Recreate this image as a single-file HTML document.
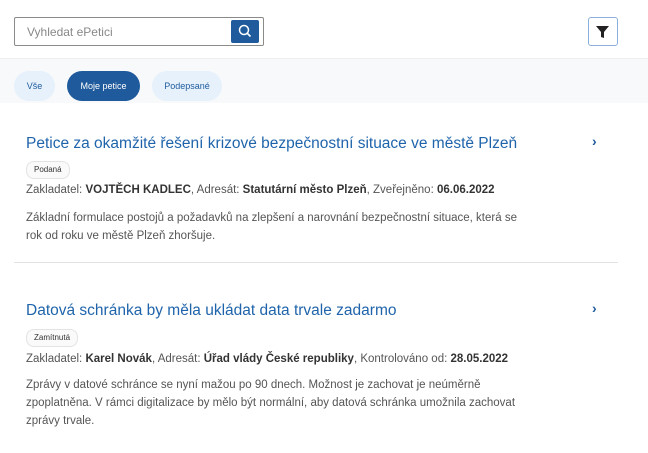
<!DOCTYPE html>
<html><head><meta charset="utf-8"><style>
body{margin:0;width:648px;height:453px;background:#fff;font-family:"Liberation Sans",sans-serif;position:relative;overflow:hidden}
.a{position:absolute}
.search{left:14px;top:17px;width:250px;height:29px;border:1px solid #8a8a8a;border-radius:2px;box-sizing:border-box}
.search span{position:absolute;left:12px;top:7px;font-size:12px;color:#888}
.sbtn{position:absolute;right:4px;top:2px;width:28px;height:23px;background:#1f5b9c;border-radius:2px}
.filt{left:588px;top:17px;width:30px;height:29px;border:1.5px solid #8cb0dd;border-radius:3px;box-sizing:border-box}
.band{left:0;top:58px;width:648px;height:44px;background:#f8f9fb;border-top:1px solid #eceef0}
.pill{top:71px;height:30px;border-radius:15px;background:#e6f1fc;color:#1f5b9c;font-size:9px;line-height:30px;text-align:center}
.title{left:26px;font-size:15.5px;color:#1f64ab;white-space:nowrap}
.badge{left:26px;height:16px;border:1px solid #e3e3e3;border-radius:8px;font-size:8px;line-height:16px;padding:0 7px;color:#333;background:#fafafa}
.meta{left:26px;font-size:11.5px;color:#555;white-space:nowrap}
.meta b{color:#333}
.desc{left:26px;font-size:11.5px;color:#555;line-height:18px}
.chev{left:592px;font-size:14px;color:#1f5b9c;font-weight:bold}
</style></head><body>
<div class="a search"><span>Vyhledat ePetici</span><div class="sbtn"><svg width="28" height="23"><circle cx="13" cy="10" r="4.5" fill="none" stroke="#fff" stroke-width="1.5"/><line x1="16.3" y1="13.3" x2="19.5" y2="16.5" stroke="#fff" stroke-width="1.6"/></svg></div></div>
<div class="a filt"><svg width="27" height="26"><path d="M7 8h13l-5 6v6l-3-1v-5z" fill="#222"/></svg></div>
<div class="a band"></div>
<div class="a pill" style="left:14px;width:41px">Vše</div>
<div class="a pill" style="left:67px;width:73px;background:#1f5b9c;color:#fff">Moje petice</div>
<div class="a pill" style="left:152px;width:70px">Podepsané</div>

<div class="a title" style="top:135px">Petice za okamžité řešení krizové bezpečnostní situace ve městě Plzeň</div>
<div class="a chev" style="top:133px">›</div>
<div class="a badge" style="top:161px">Podaná</div>
<div class="a meta" style="top:184px">Zakladatel: <b>VOJTĚCH KADLEC</b>, Adresát: <b>Statutární město Plzeň</b>, Zveřejněno: <b>06.06.2022</b></div>
<div class="a desc" style="top:209px;width:510px">Základní formulace postojů a požadavků na zlepšení a narovnání bezpečnostní situace, která se rok od roku ve městě Plzeň zhoršuje.</div>
<div class="a" style="left:14px;top:262px;width:604px;height:1px;background:#e2e2e2"></div>

<div class="a title" style="top:302px">Datová schránka by měla ukládat data trvale zadarmo</div>
<div class="a chev" style="top:300px">›</div>
<div class="a badge" style="top:329px">Zamítnutá</div>
<div class="a meta" style="top:353px">Zakladatel: <b>Karel Novák</b>, Adresát: <b>Úřad vlády České republiky</b>, Kontrolováno od: <b>28.05.2022</b></div>
<div class="a desc" style="top:376px;width:505px">Zprávy v datové schránce se nyní mažou po 90 dnech. Možnost je zachovat je neúměrně zpoplatněna. V rámci digitalizace by mělo být normální, aby datová schránka umožnila zachovat zprávy trvale.</div>
</body></html>
